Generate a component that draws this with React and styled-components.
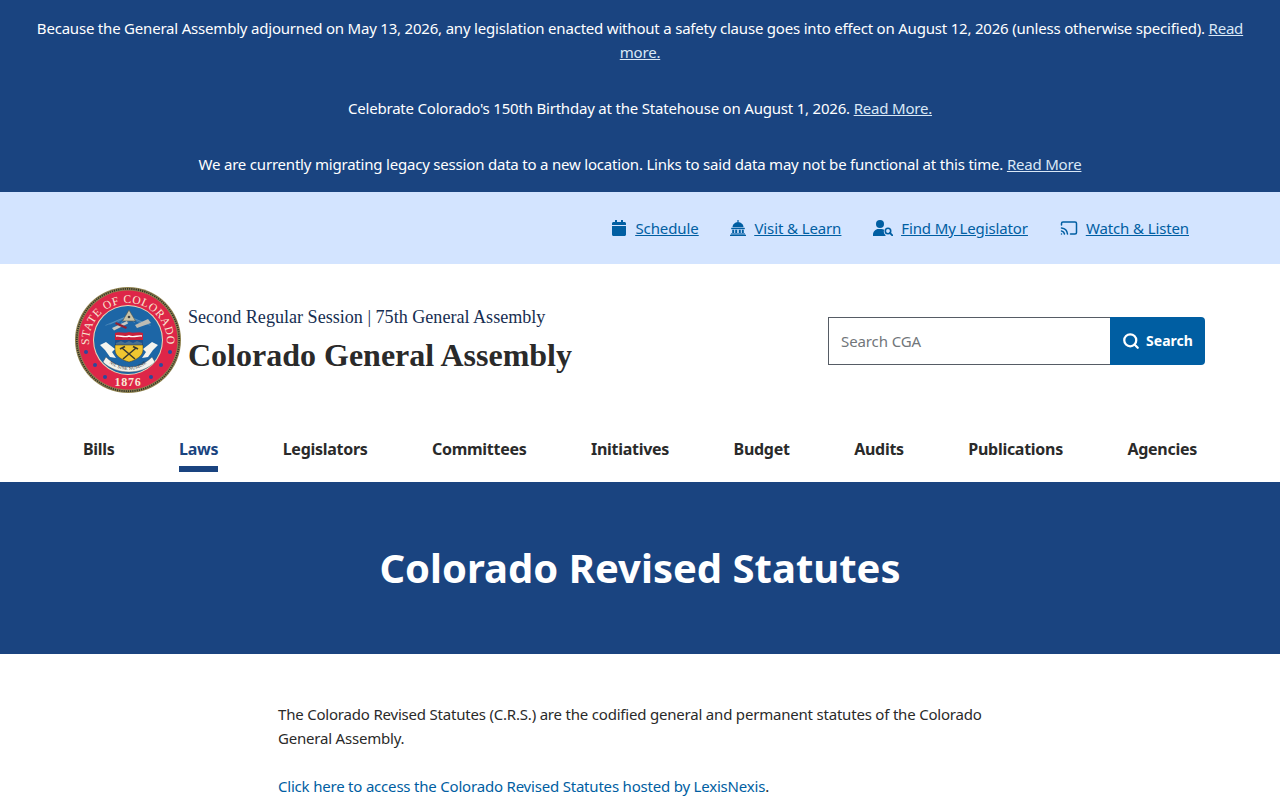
import React from 'react';
import styled, { createGlobalStyle } from 'styled-components';
import { FaCalendar } from 'react-icons/fa';
import { LuCast, LuSearch } from 'react-icons/lu';

const GlobalStyle = createGlobalStyle`
  html, body {
    margin: 0;
    padding: 0;
    background: #fff;
    color: #2a2a2a;
    font-family: "Noto Sans", "Open Sans", sans-serif;
    font-size: 15px;
    line-height: 24px;
    letter-spacing: -0.2px;
  }
  * { box-sizing: border-box; }
`;

const Banners = styled.section`
  background: #1a4480;
  color: #fff;
  padding: 16px 32px;
  display: flex;
  flex-direction: column;
  gap: 32px;
`;

const Notice = styled.p`
  margin: 0;
  text-align: center;
  a { color: #d9e8f6; text-decoration: underline; }
`;

const UtilityBar = styled.nav`
  height: 72px;
  background: #d3e4ff;
  display: flex;
  justify-content: flex-end;
  align-items: center;
  gap: 32px;
  padding-right: 91px;
`;

const UtilityLink = styled.a`
  display: flex;
  align-items: center;
  gap: 8px;
  color: #005ea2;
  letter-spacing: -0.12px;
  span { text-decoration: underline; }
  svg { flex: none; }
`;

const Masthead = styled.header`
  max-width: 1130px;
  margin: 0 auto;
  height: 152px;
  display: flex;
  align-items: center;
  justify-content: space-between;
`;

const Brand = styled.div`
  display: flex;
  align-items: center;
  gap: 7px;
`;

const BrandText = styled.div`
  margin-top: -2px;
`;

const Seal = styled.svg`
  width: 106px;
  height: 106px;
  flex: none;
`;

const Session = styled.div`
  font-family: "Liberation Serif", serif;
  font-size: 18.1px;
  line-height: 26px;
  letter-spacing: 0;
  color: #162e51;
`;

const SiteName = styled.div`
  font-family: "Liberation Serif", serif;
  font-size: 32px;
  line-height: 40px;
  font-weight: 700;
  letter-spacing: 0;
  color: #2a2a2a;
  margin-top: 5px;
`;

const SearchForm = styled.form`
  display: flex;
  width: 377px;
  height: 48px;
  margin-top: 2px;
`;

const SearchInput = styled.input`
  flex: 1;
  min-width: 0;
  border: 1px solid #565c65;
  border-right: 0;
  padding: 0 12px;
  font: inherit;
  letter-spacing: -0.1px;
  color: #1b1b1b;
  outline: none;
  &::placeholder { color: #71767a; opacity: 1; }
`;

const SearchButton = styled.button`
  width: 95px;
  border: 0;
  border-radius: 0 4px 4px 0;
  background: #005ea2;
  color: #fff;
  font: inherit;
  font-size: 14px;
  font-weight: 700;
  letter-spacing: 0;
  display: flex;
  align-items: center;
  justify-content: center;
  gap: 6px;
`;

const MainNav = styled.nav`
  max-width: 1130px;
  margin: 0 auto;
  height: 66px;
  display: flex;
  justify-content: space-between;
`;

const NavItem = styled.a`
  position: relative;
  height: 66px;
  padding: 21px 8px 0;
  font-size: 16px;
  line-height: 24px;
  font-weight: 700;
  letter-spacing: -0.28px;
  text-decoration: none;
  color: ${p => (p.$active ? '#1a4480' : '#2a2a2a')};
  &::after {
    content: '';
    display: ${p => (p.$active ? 'block' : 'none')};
    position: absolute;
    left: 8px;
    right: 8px;
    top: 50px;
    height: 6px;
    background: #1a4480;
  }
`;

const Hero = styled.div`
  height: 172px;
  background: #1a4480;
  display: flex;
  align-items: center;
  justify-content: center;
`;

const HeroTitle = styled.h1`
  margin: 0;
  color: #fff;
  font-size: 40px;
  line-height: 52px;
  font-weight: 700;
  letter-spacing: 0;
`;

const Content = styled.main`
  width: 724px;
  margin: 0 0 0 278px;
  padding-top: 48px;
  p { margin: 0 0 24px; }
  a { color: #005ea2; text-decoration: none; }
`;

function DomeIcon() {
  return (
    <svg width="16" height="16" viewBox="0 0 16 16" fill="#005ea2">
      <rect x="7.400" y="0" width="1.200" height="3" />
      <path d="M2.500 7.200C2.500 4.200 5 2.200 8 2.200s5.500 2 5.500 5z" />
      <rect x="1.200" y="7.800" width="13.600" height="1.400" />
      <path d="M2.200 9.800h2v3.200h-2zM5.200 9.800h2v3.200h-2zM8.800 9.800h2v3.200h-2zM11.800 9.800h2v3.200h-2z" />
      <rect x="1" y="13.400" width="14" height="1.100" />
      <rect x="0" y="14.700" width="16" height="1.300" />
    </svg>
  );
}

function UserSearchIcon() {
  return (
    <svg width="20" height="16" viewBox="0 0 20 16" fill="#005ea2">
      <circle cx="7" cy="4" r="4" />
      <path d="M0 16v-1.500C0 11.500 2.500 9 5.500 9h3c1 0 1.800.3 2.600.7a5 5 0 0 0 1.400 5.300V16z" />
      <circle cx="15" cy="11" r="2.700" fill="none" stroke="#005ea2" strokeWidth="1.600" />
      <path d="M17 13l2.300 2.300" stroke="#005ea2" strokeWidth="1.800" strokeLinecap="round" />
    </svg>
  );
}

function StateSeal() {
  const stars = [[11, 65], [20, 78], [30, 90], [76, 90], [86, 78], [95, 65]];
  const rays = [-60, -45, -30, -15, 0, 15, 30, 45, 60];
  return (
    <Seal viewBox="0 0 106 106">
      <defs>
        <path id="sealTop" d="M14 55a39 39 0 1 1 78 0" />
        <path id="sealMotto" d="M32 74c6 6 14 9 21 9s15-3 21-9" />
      </defs>
      <circle cx="53" cy="53" r="53" fill="#8f8350" />
      <circle cx="53" cy="53" r="51.200" fill="none" stroke="#33332a" strokeWidth="1.800" strokeDasharray="1.200 1" />
      <circle cx="53" cy="53" r="49.500" fill="#de2648" />
      <circle cx="53" cy="53" r="35" fill="#ecd9b8" />
      <circle cx="53" cy="53" r="34" fill="#1d66a6" />
      <g stroke="#6fa3c9" strokeWidth=".5">
        {rays.map(a => (
          <line key={a} x1="53" y1="29" x2={53 + 26 * Math.sin((a * Math.PI) / 180)} y2={29 + 26 * Math.cos((a * Math.PI) / 180) * -0.2 + 12} />
        ))}
      </g>
      <text fill="#f8e8d4" fontFamily="Liberation Serif, serif" fontSize="11.500" letterSpacing="0.600">
        <textPath href="#sealTop" startOffset="50%" textAnchor="middle">STATE OF COLORADO</textPath>
      </text>
      <text x="53" y="99" textAnchor="middle" fill="#f8e8d4" fontFamily="Liberation Serif, serif" fontSize="12" fontWeight="700" letterSpacing="0.800">1876</text>
      {stars.map(([x, y]) => (
        <circle key={`${x}-${y}`} cx={x} cy={y} r="2" fill="#2b4a9c" />
      ))}
      <path d="M54 23l6.500 11h-13z" fill="#c9c4a8" stroke="#55554a" strokeWidth=".6" />
      <circle cx="54" cy="30" r="1.300" fill="#444" />
      <path d="M37 41l15-7 1 2.500-14 7z" fill="#c8c8c2" />
      <path d="M41 35l11 5-1 2-11-5z" fill="#8f2233" />
      <path d="M60 38l13-6 3 4-14 5z" fill="#bcbcb4" />
      <path d="M40 46c4-2 9 1 14-1 5 2 9-1 14 1v8H40z" fill="#c8203a" />
      <path d="M41 49c4-1 8 2 13 0 5 2 9-1 13 0" fill="none" stroke="#fff" strokeWidth="1.400" />
      <path d="M40 53h28v5H40z" fill="#1d4f8c" />
      <path d="M41 56l5-2 4 2 4-2 4 2 4-2 5 2v2H41z" fill="#4a7090" />
      <path d="M40 58h28v5c0 6-7 10-14 12-7-2-14-6-14-12z" fill="#f0c630" stroke="#333" strokeWidth=".5" />
      <path d="M47 61l13 11M61 61L48 72" stroke="#3a3a30" strokeWidth="1.600" />
      <path d="M45 62l5-2.500M58 59.500l5 2.500" stroke="#3a3a30" strokeWidth="1.800" />
      <path d="M25 58l6-3 9 7-3 3 4 6-6-1-5-7z" fill="#f4f4ee" />
      <path d="M83 58l-6-3-9 7 3 3-4 6 6-1 5-7z" fill="#f4f4ee" />
      <path d="M31 70c7 7 15 10 23 10s16-3 23-10l3 5c-7 7-17 10-26 10s-19-3-26-10z" fill="#f4f4ee" stroke="#444" strokeWidth=".4" />
      <text fill="#222" fontFamily="Liberation Serif, serif" fontSize="4.500" letterSpacing="0.200">
        <textPath href="#sealMotto" startOffset="50%" textAnchor="middle">NIL SINE NUMINE</textPath>
      </text>
    </Seal>
  );
}

const navItems = ['Bills', 'Laws', 'Legislators', 'Committees', 'Initiatives', 'Budget', 'Audits', 'Publications', 'Agencies'];

export default function App() {
  return (
    <>
      <GlobalStyle />
      <Banners>
        <Notice>
          Because the General Assembly adjourned on May 13, 2026, any legislation enacted without a safety clause goes into effect on August 12, 2026 (unless otherwise specified). <a href="#a">Read more.</a>
        </Notice>
        <Notice>
          Celebrate Colorado's 150th Birthday at the Statehouse on August 1, 2026. <a href="#b">Read More.</a>
        </Notice>
        <Notice>
          We are currently migrating legacy session data to a new location. Links to said data may not be functional at this time. <a href="#c">Read More</a>
        </Notice>
      </Banners>
      <UtilityBar>
        <UtilityLink href="#schedule"><FaCalendar size={16} /><span>Schedule</span></UtilityLink>
        <UtilityLink href="#visit"><DomeIcon /><span>Visit &amp; Learn</span></UtilityLink>
        <UtilityLink href="#find"><UserSearchIcon /><span>Find My Legislator</span></UtilityLink>
        <UtilityLink href="#watch"><LuCast size={18} /><span>Watch &amp; Listen</span></UtilityLink>
      </UtilityBar>
      <Masthead>
        <Brand>
          <StateSeal />
          <BrandText>
            <Session>Second Regular Session | 75th General Assembly</Session>
            <SiteName>Colorado General Assembly</SiteName>
          </BrandText>
        </Brand>
        <SearchForm onSubmit={e => e.preventDefault()}>
          <SearchInput placeholder="Search CGA" />
          <SearchButton type="submit"><LuSearch size={18} strokeWidth={3} />Search</SearchButton>
        </SearchForm>
      </Masthead>
      <MainNav>
        {navItems.map(item => (
          <NavItem key={item} href={`#${item}`} $active={item === 'Laws'}>{item}</NavItem>
        ))}
      </MainNav>
      <Hero><HeroTitle>Colorado Revised Statutes</HeroTitle></Hero>
      <Content>
        <p>The Colorado Revised Statutes (C.R.S.) are the codified general and permanent statutes of the Colorado General Assembly.</p>
        <p><a href="#lexis">Click here to access the Colorado Revised Statutes hosted by LexisNexis</a>.</p>
      </Content>
    </>
  );
}
